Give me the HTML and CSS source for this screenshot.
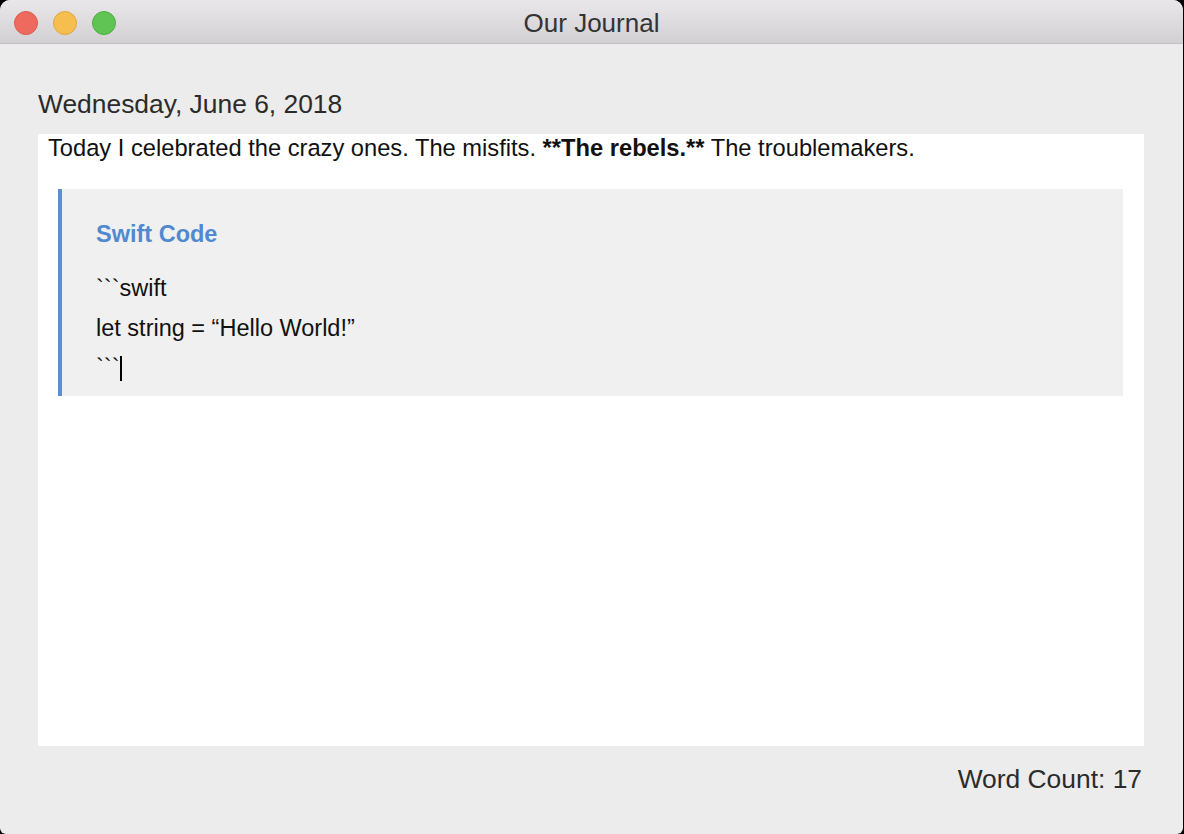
FILE: index.html
```html
<!DOCTYPE html>
<html lang="en">
<head>
    <meta charset="UTF-8">
    <title>Our Journal</title>
    <link rel="stylesheet" href="styles.css">
</head>
<body>
    <div class="window">
        <div class="titlebar">
            <div class="lights">
                <span class="light close"></span>
                <span class="light minimize"></span>
                <span class="light zoom"></span>
            </div>
            <div class="title">Our Journal</div>
        </div>
        <div class="content">
            <div class="date">Wednesday, June 6, 2018</div>
            <div class="editor">
                <p class="entry">Today I celebrated the crazy ones. The misfits. <b>**The rebels.**</b> The troublemakers.</p>
                <div class="code-block">
                    <div class="code-title">Swift Code</div>
                    <div class="code-line">```swift</div>
                    <div class="code-line">let string = “Hello World!”</div>
                    <div class="code-line">```<span class="caret"></span></div>
                </div>
            </div>
            <div class="word-count">Word Count: 17</div>
        </div>
    </div>
</body>
</html>
```

FILE: styles.css
```css
html, body {
    margin: 0;
    height: 100%;
    background-color: #000;
}

body {
    font-family: "Liberation Sans", Arial, sans-serif;
}

.window {
    height: 834px;
    width: 1183px;
    background-color: #ececec;
    border-radius: 10px 10px 6px 6px;
    overflow: hidden;
    display: flex;
    flex-direction: column;
}

.titlebar {
    position: relative;
    height: 44px;
    flex: none;
    background: linear-gradient(to bottom, #e9e7e9, #d2d0d2);
    border-bottom: 1px solid #c2c0c2;
    box-sizing: border-box;
    display: flex;
    align-items: center;
    justify-content: center;
}

.lights {
    position: absolute;
    left: 14px;
    top: 11px;
    display: flex;
    gap: 15px;
}

.light {
    width: 24px;
    height: 24px;
    border-radius: 50%;
    box-sizing: border-box;
}

.close {
    background-color: #ee6a5f;
    border: 1px solid #dc5a50;
}

.minimize {
    background-color: #f6be4f;
    border: 1px solid #e0a83c;
}

.zoom {
    background-color: #5fc454;
    border: 1px solid #4eae43;
}

.title {
    font-size: 26px;
    color: #333;
    margin-top: 4px;
}

.content {
    flex: 1;
    padding: 45px 39px 0 38px;
    display: flex;
    flex-direction: column;
}

.date {
    font-size: 26.4px;
    line-height: 30px;
    color: #2b2b2b;
    margin-bottom: 15px;
}

.editor {
    background-color: #fff;
    height: 612px;
    box-sizing: border-box;
    padding: 1px 21px 0 10px;
}

.entry {
    margin: 0;
    font-size: 23.7px;
    line-height: 26px;
    color: #111;
}

.code-block {
    margin: 28px 0 0 10px;
    background-color: #f0f0f0;
    border-left: 4px solid #5b8fd2;
    padding: 32px 34px 14px;
    height: 207px;
    box-sizing: border-box;
}

.code-title {
    font-size: 23.5px;
    font-weight: bold;
    color: #5089cf;
    line-height: 26px;
    margin-bottom: 22px;
}

.code-line {
    font-size: 23.5px;
    line-height: 39.5px;
    color: #111;
}

.caret {
    display: inline-block;
    width: 2px;
    height: 25px;
    background-color: #000;
    vertical-align: -6px;
    margin-left: 1px;
}

.word-count {
    font-size: 26.4px;
    line-height: 30px;
    color: #2b2b2b;
    text-align: right;
    margin-top: 18px;
    padding-right: 2px;
}
```
